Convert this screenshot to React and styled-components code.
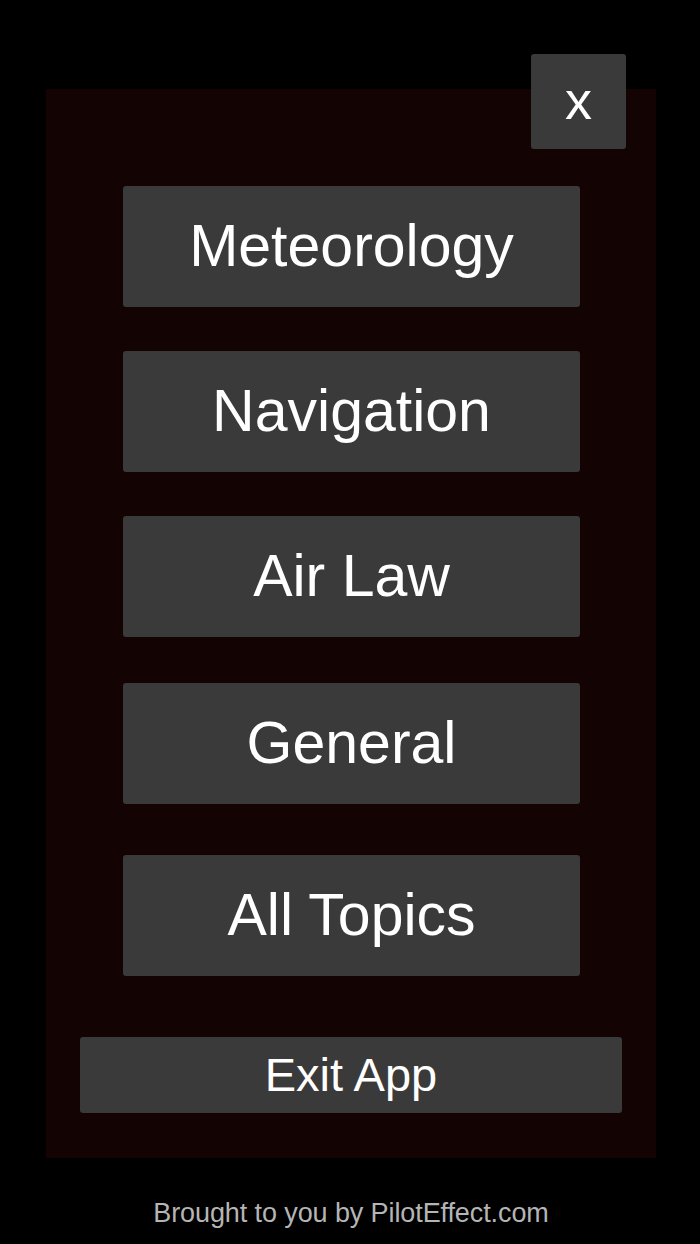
import React from 'react';
import styled, { createGlobalStyle } from 'styled-components';

const GlobalStyle = createGlobalStyle`
  html, body {
    margin: 0;
    padding: 0;
    background: #000;
  }
  body {
    font-family: "Liberation Sans", Arial, sans-serif;
  }
`;

const Screen = styled.div`
  width: 700px;
  height: 1244px;
  background: #000;
  display: flex;
  flex-direction: column;
  align-items: center;
  padding-top: 89px;
  box-sizing: border-box;
`;

const Panel = styled.div`
  position: relative;
  width: 610px;
  height: 1069px;
  margin-left: 2px;
  background: #140303;
  display: flex;
  flex-direction: column;
  align-items: center;
  padding-top: 97px;
  box-sizing: border-box;
`;

const CloseButton = styled.button`
  position: absolute;
  top: -35px;
  right: 30px;
  width: 95px;
  height: 95px;
  border: none;
  border-radius: 3px;
  background: #3a3a3a;
  color: #fff;
  font-family: "Liberation Sans", Arial, sans-serif;
  font-size: 54px;
  line-height: 1;
  padding: 0 0 4px;
  cursor: pointer;
`;

const TopicButton = styled.button`
  width: 457px;
  height: 121px;
  margin-top: ${p => p.$gap || 0}px;
  margin-left: 1px;
  border: none;
  border-radius: 3px;
  background: #3a3a3a;
  color: #fff;
  font-family: "Liberation Sans", Arial, sans-serif;
  font-size: 59px;
  padding: 0 0 2px;
  cursor: pointer;
`;

const ExitButton = styled.button`
  width: 542px;
  height: 76px;
  margin-top: 61px;
  border: none;
  border-radius: 3px;
  background: #3a3a3a;
  color: #fff;
  font-family: "Liberation Sans", Arial, sans-serif;
  font-size: 47px;
  padding: 0 0 2px;
  cursor: pointer;
`;

const Footer = styled.div`
  margin-top: 40px;
  margin-left: 2px;
  color: #b5b5b5;
  font-size: 27px;
  letter-spacing: -0.1px;
`;

const topics = [
  { label: 'Meteorology', gap: 0 },
  { label: 'Navigation', gap: 44 },
  { label: 'Air Law', gap: 44 },
  { label: 'General', gap: 46 },
  { label: 'All Topics', gap: 51 },
];

export default function App() {
  return (
    <>
      <GlobalStyle />
      <Screen>
        <Panel>
          <CloseButton>x</CloseButton>
          {topics.map(t => (
            <TopicButton key={t.label} $gap={t.gap}>{t.label}</TopicButton>
          ))}
          <ExitButton>Exit App</ExitButton>
        </Panel>
        <Footer>Brought to you by PilotEffect.com</Footer>
      </Screen>
    </>
  );
}
